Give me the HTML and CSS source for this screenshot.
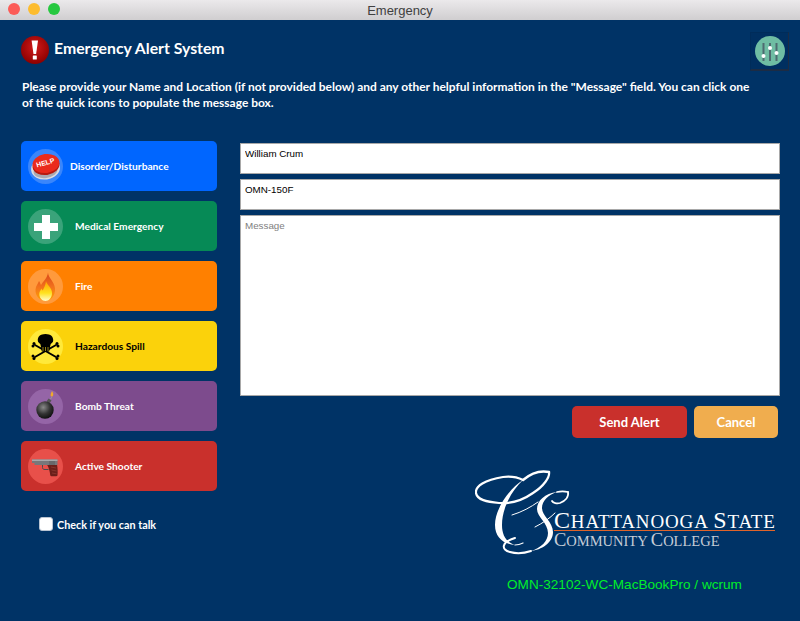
FILE: index.html
```html
<!DOCTYPE html>
<html lang="en">
<head>
    <meta charset="UTF-8">
    <meta name="viewport" content="width=device-width, initial-scale=1.0">
    <title>Emergency</title>
    <link rel="stylesheet" href="styles.css">
</head>
<body>

    <div class="titlebar">
        <div class="lights">
            <span class="light light-close"></span>
            <span class="light light-min"></span>
            <span class="light light-max"></span>
        </div>
        <div class="window-title">Emergency</div>
    </div>

    <div class="container">
        <div class="header">
            <div class="heading">
                <svg class="alert-icon" width="28" height="28" viewBox="0 0 28 28">
                    <defs>
                        <radialGradient id="alertRed" cx="0.5" cy="0.4" r="0.6">
                            <stop offset="0" stop-color="#d11a1a"/>
                            <stop offset="1" stop-color="#8c0000"/>
                        </radialGradient>
                    </defs>
                    <circle cx="14" cy="14" r="14" fill="url(#alertRed)"/>
                    <path d="M10.6 4.500h6.400l-1.900 13.500h-2.600z" fill="#fff"/>
                    <rect x="11.800" y="19.500" width="4" height="4" rx="0.600" fill="#fff"/>
                </svg>
                <h1>Emergency Alert System</h1>
            </div>
            <button class="settings" type="button">
                <svg width="30" height="30" viewBox="0 0 30 30">
                    <circle cx="15" cy="15" r="15" fill="#6fbda3"/>
                    <g stroke="#4f6b70" stroke-width="2">
                        <path d="M8.500 7v18"/>
                        <path d="M15 7v18"/>
                        <path d="M21.500 7v18"/>
                    </g>
                    <circle cx="8.500" cy="20" r="2" fill="#fff"/>
                    <circle cx="15" cy="12" r="2" fill="#fff"/>
                    <circle cx="21.500" cy="17" r="2" fill="#fff"/>
                </svg>
            </button>
        </div>

        <p class="intro">Please provide your Name and Location (if not provided below) and any other helpful information in the "Message" field. You can click one of the quick icons to populate the message box.</p>

        <div class="main">
            <div class="left-col">
                <button class="quick quick-blue" type="button">
                    <span class="quick-icon">
                        <svg width="35" height="35" viewBox="0 0 35 35">
                            <ellipse cx="17.500" cy="19.500" rx="14.500" ry="11" transform="rotate(-8 17.500 19.500)" fill="#dcdce2"/>
                            <ellipse cx="17.500" cy="22" rx="12" ry="7" transform="rotate(-8 17.500 22)" fill="#a9a9b2"/>
                            <ellipse cx="18" cy="16.500" rx="13.500" ry="9.500" transform="rotate(-8 18 16.500)" fill="#b81a10"/>
                            <ellipse cx="18" cy="14.500" rx="13.500" ry="9.500" transform="rotate(-8 18 14.500)" fill="#ea2a1c"/>
                            <text class="help-text" x="18" y="16" transform="rotate(-16 18 16)" text-anchor="middle">HELP</text>
                        </svg>
                    </span>
                    <span class="quick-label quick-label-tight">Disorder/Disturbance</span>
                </button>
                <button class="quick quick-green" type="button">
                    <span class="quick-icon">
                        <svg width="35" height="35" viewBox="0 0 35 35">
                            <path d="M14 6h8v8h8v8h-8v8h-8v-8H6v-8h8z" fill="#fff"/>
                        </svg>
                    </span>
                    <span class="quick-label">Medical Emergency</span>
                </button>
                <button class="quick quick-orange" type="button">
                    <span class="quick-icon">
                        <svg width="35" height="35" viewBox="0 0 35 35">
                            <defs>
                                <linearGradient id="flame" x1="0" y1="1" x2="0" y2="0">
                                    <stop offset="0" stop-color="#ffa200"/>
                                    <stop offset="0.5" stop-color="#f2711c"/>
                                    <stop offset="1" stop-color="#d8451a"/>
                                </linearGradient>
                                <linearGradient id="flameCore" x1="0" y1="1" x2="0" y2="0">
                                    <stop offset="0" stop-color="#fffbd0"/>
                                    <stop offset="0.4" stop-color="#ffe21f"/>
                                    <stop offset="1" stop-color="#ff9d00"/>
                                </linearGradient>
                            </defs>
                            <path d="M20 3.500c0 5 6.500 9 7 16 .4 7-4.200 12.500-9.500 12.500S7 27 7.500 20.500c.3-3.500 2.500-6 3.500-8.500 1 1.500 1.500 3 2 4 2-3.500 6.500-7 7-12.500z" fill="url(#flame)"/>
                            <path d="M18 12c.5 3.500 6 6.500 6 12 0 4.500-3 8-6.500 8S11 28.500 11.300 24.500c.2-2 1.500-3.500 2.200-5 .5 1 .8 1.500 1.200 2 1.300-2.500 3-5.500 3.300-9.500z" fill="url(#flameCore)"/>
                        </svg>
                    </span>
                    <span class="quick-label">Fire</span>
                </button>
                <button class="quick quick-yellow" type="button">
                    <span class="quick-icon">
                        <svg width="35" height="35" viewBox="0 0 35 35">
                            <g stroke="#000" stroke-width="2" stroke-linecap="round">
                                <path d="M7 16l21 12"/>
                                <path d="M28 16L7 28"/>
                            </g>
                            <g fill="#000">
                                <circle cx="6" cy="14.500" r="1.500"/>
                                <circle cx="5" cy="17" r="1.500"/>
                                <circle cx="29" cy="14.500" r="1.500"/>
                                <circle cx="30" cy="17" r="1.500"/>
                                <circle cx="6" cy="29.500" r="1.500"/>
                                <circle cx="5" cy="27" r="1.500"/>
                                <circle cx="29" cy="29.500" r="1.500"/>
                                <circle cx="30" cy="27" r="1.500"/>
                            </g>
                            <path d="M17.500 5c5.200 0 8 2.800 7.700 6.500-.1 1.800-1.300 2.600-2.500 3.500l-.7 3h-9l-.7-3c-1.200-.9-2.400-1.700-2.500-3.500C9.500 7.800 12.300 5 17.500 5z" fill="#000"/>
                            <path d="M13 18h9l-.8 4.500h-7.400z" fill="#000"/>
                            <g stroke="#b8a118" stroke-width="0.800">
                                <path d="M15 18v4"/>
                                <path d="M17.500 18v4"/>
                                <path d="M20 18v4"/>
                            </g>
                        </svg>
                    </span>
                    <span class="quick-label">Hazardous Spill</span>
                </button>
                <button class="quick quick-purple" type="button">
                    <span class="quick-icon">
                        <svg width="35" height="35" viewBox="0 0 35 35">
                            <defs>
                                <radialGradient id="bombBall" cx="0.4" cy="0.35" r="0.7">
                                    <stop offset="0" stop-color="#8a8a8a"/>
                                    <stop offset="0.55" stop-color="#333"/>
                                    <stop offset="1" stop-color="#0c0c0c"/>
                                </radialGradient>
                            </defs>
                            <path d="M20.500 9.500l3 2-2 3-3-2z" fill="#555"/>
                            <path d="M22.500 10c.5-1 1-1.500 1.500-2" stroke="#999" stroke-width="1" fill="none"/>
                            <path d="M24 2c.8 1.500 1.500 2.500 1.200 4-.2 1-.8 1.500-1.400 1.500s-1.200-.6-1.200-1.600c0-1.400.9-2.300 1.400-3.900z" fill="#f0a92d"/>
                            <circle cx="17" cy="21" r="8.700" fill="url(#bombBall)"/>
                        </svg>
                    </span>
                    <span class="quick-label">Bomb Threat</span>
                </button>
                <button class="quick quick-red" type="button">
                    <span class="quick-icon">
                        <svg width="35" height="35" viewBox="0 0 35 35">
                            <path d="M14.500 16v2.500c0 1.500 1 2 2.500 2h3.500" stroke="#4a4a4c" stroke-width="1" fill="none"/>
                            <path d="M19 15.500h10c.6 3 .9 7.500.5 10.500-.1 .8-.5 1.200-1.200 1.200h-5c-.7 0-1-.4-1.100-1.100-.3-3.300-1.100-7-3.200-10.600z" fill="#6b1f1a"/>
                            <path d="M23 18l5 1M23.500 21l5 1M24 24l4.500 .8" stroke="#8e3a30" stroke-width="0.800"/>
                            <path d="M4 10.500h25.500v5.500H6.500V14H4z" fill="#77777a"/>
                            <path d="M4 10.500h25.500v1.500H4z" fill="#a8a8aa"/>
                            <path d="M22 12v4M24 12v4M26 12v4" stroke="#4d4d50" stroke-width="0.700"/>
                        </svg>
                    </span>
                    <span class="quick-label">Active Shooter</span>
                </button>
                <label class="talk">
                    <input class="talk-box" type="checkbox">
                    Check if you can talk
                </label>
            </div>

            <div class="right-col">
                <input class="field" type="text" value="William Crum">
                <input class="field" type="text" value="OMN-150F">
                <textarea class="field message" placeholder="Message"></textarea>
                <div class="actions">
                    <button class="action action-send" type="button">Send Alert</button>
                    <button class="action action-cancel" type="button">Cancel</button>
                </div>
                <div class="logo">
                    <svg class="logo-mark" width="96" height="88" viewBox="0 0 96 88">
                        <g fill="none" stroke="#fff" stroke-linecap="round">
                            <path d="M74 3C64 1 55 5 48 11" stroke-width="2.400"/>
                            <path d="M74 3c1 5-5 14-16 21C48 31 37 35 24 34 12 33 2 31 1 24 0 17 10 11 28 8c8-1 14 0 20 3" stroke-width="2.200"/>
                            <path d="M40 76c3 0 6-1 8-2" stroke-width="1.200"/>
                            <path d="M37 46c10-3 19-8 26-13" stroke-width="1"/>
                            <path d="M60 58c8-4 15-9 20-14" stroke-width="1"/>
                            <path d="M93 23c-4-1-7-1-11 0" stroke-width="1.800"/>
                            <path d="M93 23c1 5-3 9-8 11-3 1-7 0-8-2" stroke-width="1.800"/>
                            <path d="M56 82c-6 2-14 3-21 1-9-2-9-10 5-14" stroke-width="2"/>
                        </g>
                        <g fill="#fff">
                            <path d="M48 11C34 20 20 40 20 56c0 12 8 19 20 20-9-3-13-10-13-20 0-16 9-34 21-45z"/>
                            <path d="M82 23C70 24 62 32 62 40c0 8 11 14 11 24 0 8-7 15-17 18 10-1 22-8 22-19 0-10-11-16-11-24 0-7 6-13 15-16z"/>
                        </g>
                    </svg>
                    <div class="logo-text">
                        <div class="logo-line1"><span class="logo-cap">C</span>HATTANOOGA <span class="logo-cap">S</span>TATE</div>
                        <div class="logo-line2"><span class="logo-cap">C</span>OMMUNITY <span class="logo-cap">C</span>OLLEGE</div>
                    </div>
                </div>
                <div class="machine">OMN-32102-WC-MacBookPro / wcrum</div>
            </div>
        </div>
    </div>

</body>
</html>
```

FILE: styles.css
```css
* {
    box-sizing: border-box;
}
html, body {
    height: 100%;
}
body {
    margin: 0;
    background-color: #003366;
    color: #fff;
    font-family: Lato, 'Open Sans', sans-serif;
    overflow: hidden;
}

/* window title bar */
.titlebar {
    height: 20px;
    background: linear-gradient(#ebe9eb, #d0ced0);
    display: flex;
    align-items: center;
    justify-content: center;
    position: relative;
}
.lights {
    position: absolute;
    left: 8px;
    top: 3px;
    display: flex;
    gap: 8px;
}
.light {
    width: 12px;
    height: 12px;
    border-radius: 50%;
}
.light-close { background-color: #fc5b57; }
.light-min { background-color: #fdbc2e; }
.light-max { background-color: #27c840; }
.window-title {
    font-family: 'Liberation Sans', Arial, sans-serif;
    font-size: 13px;
    color: #404040;
}

.container {
    padding: 12px 11px 0 21px;
}
.header {
    display: flex;
    justify-content: space-between;
    align-items: flex-start;
}
.heading {
    display: flex;
    align-items: center;
    gap: 5px;
    padding-top: 4px;
}
h1 {
    margin: 0 0 4px;
    font-size: 15.8px;
    font-weight: 700;
    line-height: 22px;
}
.settings {
    width: 39px;
    height: 39px;
    padding: 0;
    background: #002f60;
    border: 1px solid #002c5a;
    border-right-color: #1c2c44;
    border-bottom: 2px solid #1c2c44;
    display: flex;
    align-items: center;
    justify-content: center;
}
.intro {
    margin: 8px 0 0 1px;
    width: 735px;
    font-size: 11.96px;
    font-weight: 700;
    line-height: 16px;
}

.main {
    display: flex;
    margin-top: 30px;
    gap: 23px;
}
.left-col {
    width: 196px;
    display: flex;
    flex-direction: column;
    gap: 10px;
}
.quick {
    height: 50px;
    border: none;
    border-radius: 5px;
    padding: 0 0 0 7px;
    display: flex;
    align-items: center;
    color: #fff;
    font-family: inherit;
    font-size: 10.2px;
    font-weight: 700;
    text-align: left;
}
.quick-icon {
    width: 35px;
    height: 35px;
    border-radius: 50%;
    flex: none;
    display: block;
}
.quick-label {
    margin-left: 12px;
}
.quick-label-tight {
    margin-left: 7px;
}
.quick-blue { background-color: #0066ff; }
.quick-blue .quick-icon { background-color: #3a86fb; }
.quick-green { background-color: #068a56; }
.quick-green .quick-icon { background-color: #3aa37a; }
.quick-orange { background-color: #ff8000; }
.quick-orange .quick-icon { background-color: #ff9a3c; }
.quick-yellow { background-color: #fbd20b; color: #000; }
.quick-yellow .quick-icon { background-color: #ffe93a; }
.quick-purple { background-color: #7d4b8d; }
.quick-purple .quick-icon { background-color: #9565a7; }
.quick-red { background-color: #c9302c; }
.quick-red .quick-icon { background-color: #e8504a; }
.help-text {
    font-family: 'Liberation Sans', Arial, sans-serif;
    font-size: 7px;
    font-weight: 700;
    fill: #fff;
}

.talk {
    display: flex;
    align-items: center;
    gap: 4px;
    margin: 16px 0 0 18px;
    font-size: 10.8px;
    font-weight: 700;
}
.talk-box {
    appearance: none;
    width: 14px;
    height: 14px;
    margin: 0;
    background: #fff;
    border: 1px solid #b9c4d2;
    border-radius: 3px;
}

.right-col {
    width: 540px;
    padding-top: 2px;
    display: flex;
    flex-direction: column;
}
.field {
    display: block;
    width: 100%;
    height: 31px;
    margin: 0 0 5px;
    padding: 4px 4px 0;
    background: #fff;
    border: 1px solid #a8a8a8;
    color: #000;
    font-family: 'Liberation Sans', Arial, sans-serif;
    font-size: 9.8px;
    line-height: 11px;
    border-radius: 0;
    outline: none;
    resize: none;
    vertical-align: top;
}
input.field {
    padding-bottom: 15px;
}
.message {
    height: 181px;
    margin-bottom: 10px;
}
.message::placeholder {
    color: #808080;
    opacity: 1;
}
.actions {
    display: flex;
    gap: 7px;
    padding-left: 332px;
}
.action {
    height: 32px;
    border: none;
    border-radius: 5px;
    color: #fff;
    font-family: inherit;
    font-size: 13px;
    font-weight: 700;
}
.action-send {
    width: 115px;
    background-color: #c9302c;
}
.action-cancel {
    width: 84px;
    background-color: #f0ad4e;
}

/* college logo */
.logo {
    display: flex;
    align-items: flex-start;
    position: relative;
    margin: 31px 0 0 235px;
    height: 88px;
}
.logo-mark {
    flex: none;
}
.logo-text {
    position: absolute;
    left: 79px;
    top: 40px;
    font-family: 'Liberation Serif', 'Times New Roman', serif;
    white-space: nowrap;
}
.logo-line1 {
    width: 221px;
    height: 22px;
    font-size: 19px;
    line-height: 22px;
    letter-spacing: 0.85px;
    border-bottom: 1px solid #e0642a;
    color: #fff;
}
.logo-line1 .logo-cap {
    font-size: 24px;
}
.logo-line2 {
    margin-top: 1px;
    font-size: 14.5px;
    line-height: 17px;
    color: #c5ccd6;
}
.logo-line2 .logo-cap {
    font-size: 18.5px;
}
.machine {
    margin: 20px 0 0 267px;
    font-family: 'Liberation Sans', Arial, sans-serif;
    font-size: 13.6px;
    color: #00ee2a;
}
```
